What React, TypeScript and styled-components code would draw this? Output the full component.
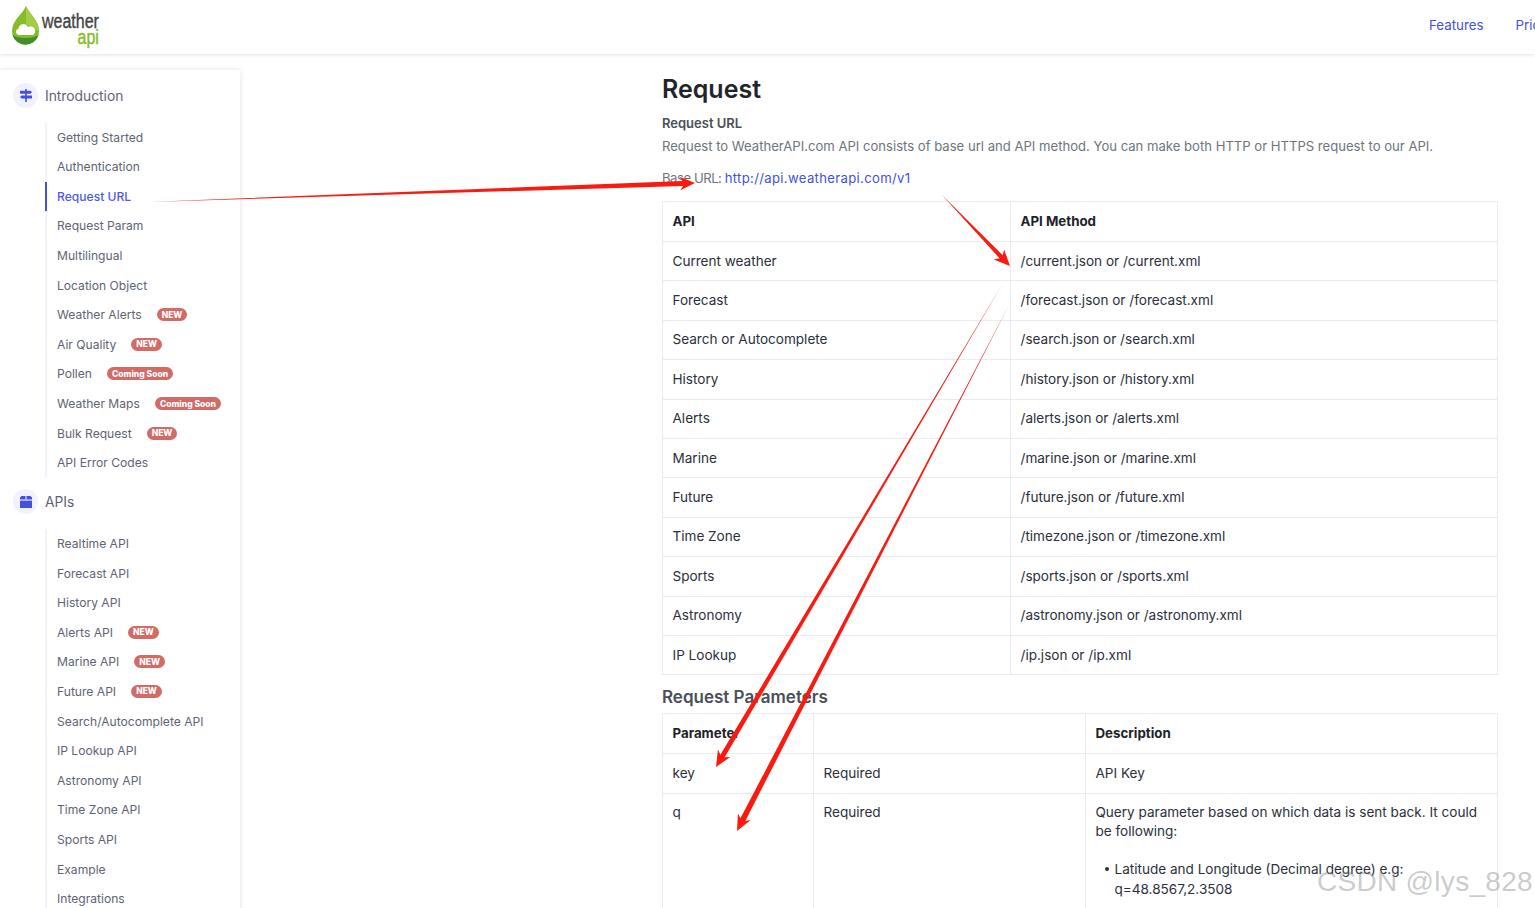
import styled, { createGlobalStyle } from 'styled-components';

const GlobalStyle = createGlobalStyle`
    html, body {
        margin: 0;
        height: 908px;
        overflow: hidden;
        background: #fff;
        font-family: Inter, 'Open Sans', 'Liberation Sans', sans-serif;
    }
    * {
        box-sizing: border-box;
    }
`;

const Page = styled.div`
    position: relative;
    width: 1535px;
    height: 908px;
    overflow: hidden;
`;

const Header = styled.header`
    height: 54px;
    display: flex;
    align-items: center;
    justify-content: space-between;
    padding-left: 12px;
    background: #fff;
    box-shadow: 0 1px 4px rgba(0, 0, 0, 0.12);
`;

const Logo = styled.div`
    display: flex;
    align-items: flex-start;
    gap: 3px;
    height: 46px;
`;

const LogoWords = styled.div`
    display: flex;
    flex-direction: column;
    align-items: flex-end;
    padding: 9px 3px 0 0;
    font-family: 'Liberation Sans', sans-serif;
    font-size: 20px;
    line-height: 16px;
    color: #444;
    -webkit-text-stroke: 0.4px currentColor;
    transform: scaleX(0.8);
    transform-origin: left top;
    span {
        color: #86bc2b;
    }
`;

const TopNav = styled.nav`
    display: flex;
    gap: 32px;
    width: 106px;
    margin-top: -5px;
    white-space: nowrap;
    a {
        font-size: 13.3px;
        color: #4350e0;
    }
`;

const Body = styled.div`
    display: flex;
    align-items: flex-start;
`;

const Sidebar = styled.aside`
    width: 240px;
    height: 900px;
    flex-shrink: 0;
    margin-top: 16px;
    padding: 1px 0 0 13px;
    background: #fff;
    box-shadow: 0 0 6px rgba(0, 0, 0, 0.12);
`;

const SectionHead = styled.div`
    display: flex;
    align-items: center;
    gap: 7px;
    height: 25px;
    margin: 12px 0 14.4px;
    font-size: 13.8px;
    color: #5e6473;
    & ~ & {
        margin-top: 11.8px;
    }
`;

const IconCircle = styled.span`
    width: 25px;
    height: 25px;
    display: flex;
    align-items: center;
    justify-content: center;
    border-radius: 50%;
    background: #f1f2fe;
`;

const SubList = styled.ul`
    list-style: none;
    margin: 0 0 0 32px;
    padding: 0;
    border-left: 2px solid #f3f4fb;
`;

const SubItem = styled.li<{ $active?: boolean }>`
    height: 29.6px;
    display: flex;
    align-items: center;
    margin-left: -2px;
    padding-left: 10px;
    border-left: 2px solid ${(p) => (p.$active ? '#4350e0' : 'transparent')};
    font-size: 12.1px;
    font-weight: ${(p) => (p.$active ? 500 : 400)};
    color: ${(p) => (p.$active ? '#4e5ae6' : '#5e6473')};
    white-space: nowrap;
`;

const Badge = styled.span`
    margin-left: 15px;
    height: 13px;
    padding: 0 5px;
    display: flex;
    align-items: center;
    border-radius: 7px;
    background: #d26a66;
    color: #fff;
    font-size: 8.5px;
    font-weight: 800;
`;

const Main = styled.main`
    width: 836px;
    margin-left: 422px;
    padding-top: 18px;
`;

const Title = styled.h1`
    margin: 0 0 7px;
    font-size: 25px;
    line-height: 34px;
    font-weight: 600;
    color: #212529;
`;

const SubTitle = styled.h2`
    margin: 0;
    font-size: 13px;
    line-height: 20px;
    font-weight: 600;
    color: #495057;
`;

const Paragraph = styled.p`
    margin: 3px 0 0;
    font-size: 13.1px;
    line-height: 20px;
    color: #6c757d;
    white-space: nowrap;
`;

const BaseUrl = styled(Paragraph)`
    margin: 12px 0 13px;
    letter-spacing: -0.45px;
    a {
        letter-spacing: 0.34px;
        color: #4350e0;
    }
`;

const Table = styled.table`
    width: 100%;
    border-collapse: collapse;
    table-layout: fixed;
    font-size: 13.55px;
    color: #2b303b;
    th,
    td {
        border: 1px solid #e9ebf0;
        padding: 0 10px 0 9.5px;
        text-align: left;
        vertical-align: middle;
        line-height: 19px;
    }
    th {
        height: 40px;
        font-size: 13.3px;
        font-weight: 700;
        color: #1e2229;
    }
    td {
        height: 39.4px;
    }
`;

const TallCell = styled.td`
    && {
        height: 200px;
        vertical-align: top;
        padding-top: 9px;
    }
`;

const ParamsHeading = styled.h3`
    margin: 12px 0 6px;
    font-size: 17px;
    line-height: 20px;
    font-weight: 600;
    color: #495057;
`;

const ValueList = styled.ul`
    list-style: none;
    margin: 18px 0 0;
    padding-left: 19px;
    li {
        position: relative;
        line-height: 20px;
    }
    li::before {
        content: '';
        position: absolute;
        left: -10px;
        top: 8px;
        width: 4px;
        height: 4px;
        border-radius: 50%;
        background: #2b303b;
    }
`;

const ArrowLayer = styled.svg`
    position: absolute;
    inset: 0;
    pointer-events: none;
`;

const Watermark = styled.div`
    position: absolute;
    left: 1317px;
    top: 863px;
    font-family: 'Liberation Sans', sans-serif;
    font-size: 28px;
    line-height: 38px;
    letter-spacing: 0.3px;
    color: rgba(130, 130, 130, 0.42);
    white-space: nowrap;
`;

type SideEntry = { label: string; badge?: string; active?: boolean };

const introItems: SideEntry[] = [
    { label: 'Getting Started' },
    { label: 'Authentication' },
    { label: 'Request URL', active: true },
    { label: 'Request Param' },
    { label: 'Multilingual' },
    { label: 'Location Object' },
    { label: 'Weather Alerts', badge: 'NEW' },
    { label: 'Air Quality', badge: 'NEW' },
    { label: 'Pollen', badge: 'Coming Soon' },
    { label: 'Weather Maps', badge: 'Coming Soon' },
    { label: 'Bulk Request', badge: 'NEW' },
    { label: 'API Error Codes' },
];

const apiItems: SideEntry[] = [
    { label: 'Realtime API' },
    { label: 'Forecast API' },
    { label: 'History API' },
    { label: 'Alerts API', badge: 'NEW' },
    { label: 'Marine API', badge: 'NEW' },
    { label: 'Future API', badge: 'NEW' },
    { label: 'Search/Autocomplete API' },
    { label: 'IP Lookup API' },
    { label: 'Astronomy API' },
    { label: 'Time Zone API' },
    { label: 'Sports API' },
    { label: 'Example' },
    { label: 'Integrations' },
];

const methods = [
    ['Current weather', '/current.json or /current.xml'],
    ['Forecast', '/forecast.json or /forecast.xml'],
    ['Search or Autocomplete', '/search.json or /search.xml'],
    ['History', '/history.json or /history.xml'],
    ['Alerts', '/alerts.json or /alerts.xml'],
    ['Marine', '/marine.json or /marine.xml'],
    ['Future', '/future.json or /future.xml'],
    ['Time Zone', '/timezone.json or /timezone.xml'],
    ['Sports', '/sports.json or /sports.xml'],
    ['Astronomy', '/astronomy.json or /astronomy.xml'],
    ['IP Lookup', '/ip.json or /ip.xml'],
];

function SideItems({ items }: { items: SideEntry[] }) {
    return (
        <SubList>
            {items.map((item) => (
                <SubItem key={item.label} $active={item.active}>
                    {item.label}
                    {item.badge && <Badge>{item.badge}</Badge>}
                </SubItem>
            ))}
        </SubList>
    );
}

function LogoDrop() {
    return (
        <svg width="27" height="46" viewBox="0 0 27 46">
            <path d="M14 2 C18 11 27 16 27 27 A13.5 13.5 0 0 1 0 27 C0 16 10 11 14 2 Z" fill="#86bc2b" />
            <path d="M14 2 C18 11 27 16 27 27 L14 20 Z" fill="#a5cc45" />
            <path d="M0.5 31 C6 35 21 35 26.5 31 A13.5 13.5 0 0 1 0.5 31 Z" fill="#3f8f2b" />
            <path d="M7 31 a3.2 3.2 0 0 1 -0.5 -6.3 a5 5 0 0 1 9.5 -1.7 a4 4 0 0 1 5 8 Z" fill="#fff" />
        </svg>
    );
}

function SignIcon() {
    return (
        <svg width="12" height="13" viewBox="0 0 12 13" fill="#4350e0">
            <rect x="5.2" y="0" width="1.6" height="13" />
            <path d="M0 1.8 H10.5 L12 3.3 L10.5 4.8 H0 Z" />
            <path d="M1.5 6.6 H12 V9.6 H1.5 L0 8.1 Z" />
        </svg>
    );
}

function BoxIcon() {
    return (
        <svg width="12" height="12" viewBox="0 0 12 12" fill="#4350e0">
            <path d="M1.6 0 H5.5 V3.6 H0 V1.6 Z" />
            <path d="M6.5 0 H10.4 L12 1.6 V3.6 H6.5 Z" />
            <path d="M0 4.6 H12 V12 H0 Z" />
        </svg>
    );
}

// tapered red annotation arrow, tail is a sharp point
function arrowPoints(x1: number, y1: number, x2: number, y2: number, w: number, head: number) {
    const len = Math.hypot(x2 - x1, y2 - y1);
    const ux = (x2 - x1) / len;
    const uy = (y2 - y1) / len;
    const nx = -uy;
    const ny = ux;
    const at = (along: number, side: number) =>
        `${x2 - ux * along + nx * side},${y2 - uy * along + ny * side}`;
    return [
        `${x1},${y1}`,
        at(head * 0.8, w / 2),
        at(head, head * 0.45),
        `${x2},${y2}`,
        at(head, -head * 0.45),
        at(head * 0.8, -w / 2),
    ].join(' ');
}

const arrows = [
    [148, 202, 695, 183, 5, 15],
    [942, 195, 1010, 266, 4.5, 16],
    [1003, 283, 716, 767, 5, 16],
    [1010, 303, 737, 831, 5.5, 16],
];

function App() {
    return (
        <Page>
            <GlobalStyle />
            <Header>
                <Logo>
                    <LogoDrop />
                    <LogoWords>
                        weather
                        <span>api</span>
                    </LogoWords>
                </Logo>
                <TopNav>
                    <a>Features</a>
                    <a>Pricing</a>
                </TopNav>
            </Header>
            <Body>
                <Sidebar>
                    <SectionHead>
                        <IconCircle>
                            <SignIcon />
                        </IconCircle>
                        Introduction
                    </SectionHead>
                    <SideItems items={introItems} />
                    <SectionHead>
                        <IconCircle>
                            <BoxIcon />
                        </IconCircle>
                        APIs
                    </SectionHead>
                    <SideItems items={apiItems} />
                </Sidebar>
                <Main>
                    <Title>Request</Title>
                    <SubTitle>Request URL</SubTitle>
                    <Paragraph>
                        Request to WeatherAPI.com API consists of base url and API method. You can make both HTTP or
                        HTTPS request to our API.
                    </Paragraph>
                    <BaseUrl>
                        Base URL: <a>http://api.weatherapi.com/v1</a>
                    </BaseUrl>
                    <Table>
                        <colgroup>
                            <col width="348" />
                            <col />
                        </colgroup>
                        <thead>
                            <tr>
                                <th>API</th>
                                <th>API Method</th>
                            </tr>
                        </thead>
                        <tbody>
                            {methods.map(([name, method]) => (
                                <tr key={name}>
                                    <td>{name}</td>
                                    <td>{method}</td>
                                </tr>
                            ))}
                        </tbody>
                    </Table>
                    <ParamsHeading>Request Parameters</ParamsHeading>
                    <Table>
                        <colgroup>
                            <col width="151" />
                            <col width="272" />
                            <col />
                        </colgroup>
                        <thead>
                            <tr>
                                <th>Parameter</th>
                                <th></th>
                                <th>Description</th>
                            </tr>
                        </thead>
                        <tbody>
                            <tr>
                                <td>key</td>
                                <td>Required</td>
                                <td>API Key</td>
                            </tr>
                            <tr>
                                <TallCell>q</TallCell>
                                <TallCell>Required</TallCell>
                                <TallCell>
                                    Query parameter based on which data is sent back. It could be following:
                                    <ValueList>
                                        <li>Latitude and Longitude (Decimal degree) e.g: q=48.8567,2.3508</li>
                                    </ValueList>
                                </TallCell>
                            </tr>
                        </tbody>
                    </Table>
                </Main>
            </Body>
            <ArrowLayer width="1535" height="908">
                {arrows.map(([x1, y1, x2, y2, w, head]) => (
                    <polygon key={x1} points={arrowPoints(x1, y1, x2, y2, w, head)} fill="#fb1a10" />
                ))}
            </ArrowLayer>
            <Watermark>CSDN @lys_828</Watermark>
        </Page>
    );
}

export default App;
